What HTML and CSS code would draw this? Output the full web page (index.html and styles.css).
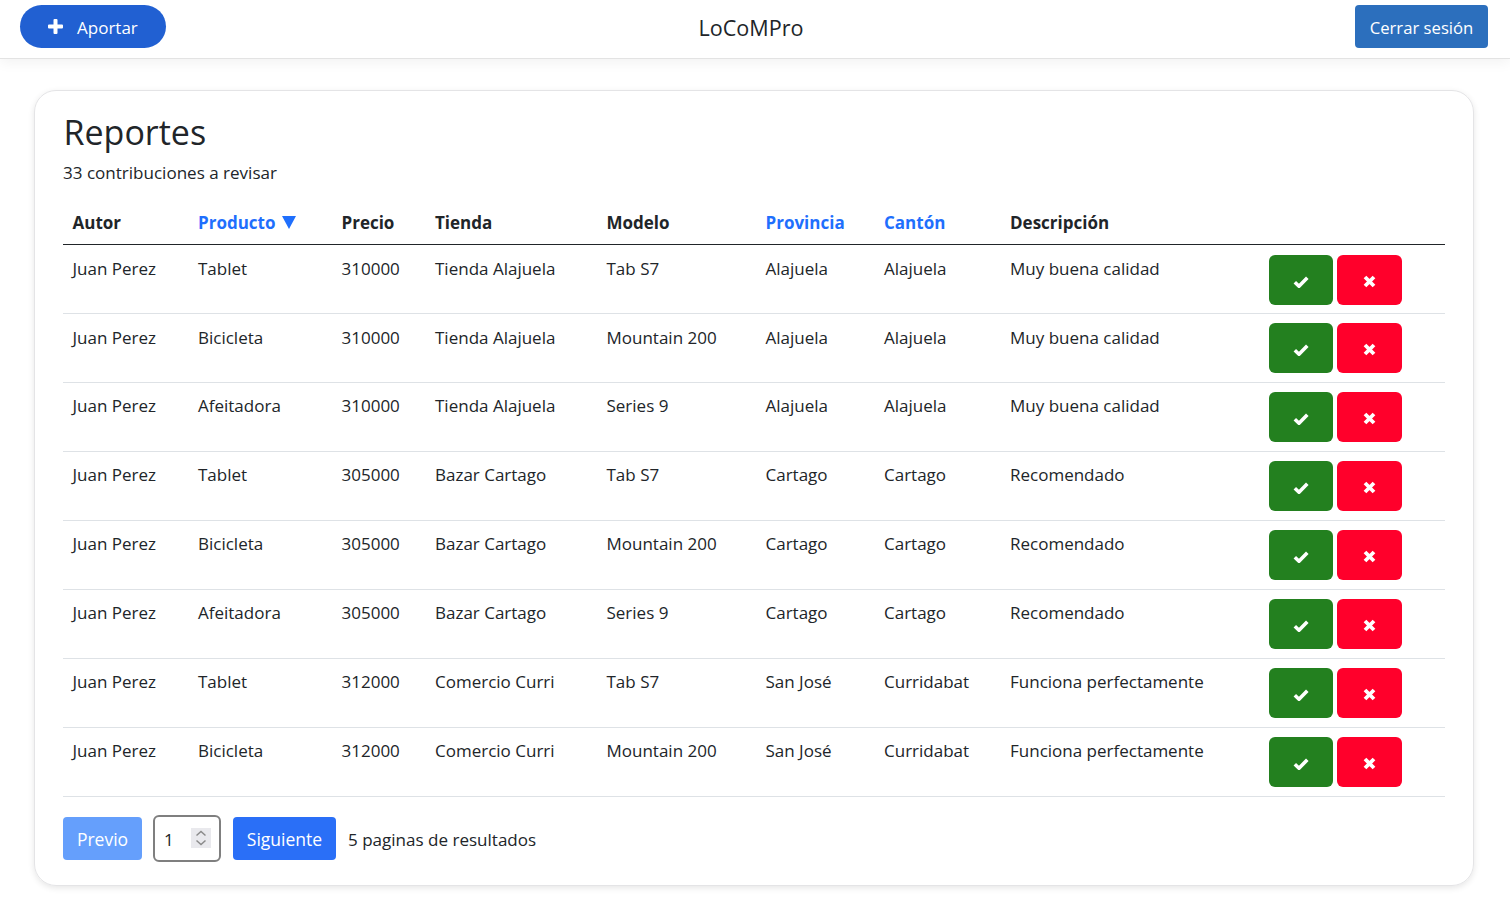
FILE: index.html
```html
<!DOCTYPE html>
<html lang="es">
<head>
<meta charset="utf-8">
<title>LoCoMPro</title>
<link rel="stylesheet" href="styles.css">
</head>
<body>
<header class="topbar">
  <button class="btn-aportar"><svg class="plus" viewBox="0 0 15 15"><path d="M5.500 1a1 1 0 0 1 1-1h2a1 1 0 0 1 1 1v4.500H14a1 1 0 0 1 1 1v2a1 1 0 0 1-1 1H9.500V14a1 1 0 0 1-1 1h-2a1 1 0 0 1-1-1V9.500H1a1 1 0 0 1-1-1v-2a1 1 0 0 1 1-1h4.500z"/></svg><span class="lbl">Aportar</span></button>
  <div class="brand">LoCoMPro</div>
  <button class="btn-logout">Cerrar sesión</button>
</header>
<main class="card">
  <h1>Reportes</h1>
  <p class="count">33 contribuciones a revisar</p>
  <table>
    <colgroup><col class="c1"><col class="c2"><col class="c3"><col class="c4"><col class="c5"><col class="c6"><col class="c7"><col class="c8"><col class="c9"></colgroup>
    <thead><tr><th>Autor</th><th class="link">Producto <svg class="sort" viewBox="0 0 14 13"><path d="M0 0h14L7 13z"/></svg></th><th>Precio</th><th>Tienda</th><th>Modelo</th><th class="link">Provincia</th><th class="link">Cantón</th><th>Descripción</th><th></th></tr></thead>
    <tbody>
      <tr><td>Juan Perez</td><td>Tablet</td><td>310000</td><td>Tienda Alajuela</td><td>Tab S7</td><td>Alajuela</td><td>Alajuela</td><td>Muy buena calidad</td><td class="acts"><button class="ok"><svg viewBox="0 0 16 12"><path d="M1.800 6.300l4.200 3.900L14.300 1.800"/></svg></button><button class="no"><svg viewBox="0 0 13 13"><path d="M2 2l9 9M11 2l-9 9"/></svg></button></td></tr>
      <tr><td>Juan Perez</td><td>Bicicleta</td><td>310000</td><td>Tienda Alajuela</td><td>Mountain 200</td><td>Alajuela</td><td>Alajuela</td><td>Muy buena calidad</td><td class="acts"><button class="ok"><svg viewBox="0 0 16 12"><path d="M1.800 6.300l4.200 3.900L14.300 1.800"/></svg></button><button class="no"><svg viewBox="0 0 13 13"><path d="M2 2l9 9M11 2l-9 9"/></svg></button></td></tr>
      <tr><td>Juan Perez</td><td>Afeitadora</td><td>310000</td><td>Tienda Alajuela</td><td>Series 9</td><td>Alajuela</td><td>Alajuela</td><td>Muy buena calidad</td><td class="acts"><button class="ok"><svg viewBox="0 0 16 12"><path d="M1.800 6.300l4.200 3.900L14.300 1.800"/></svg></button><button class="no"><svg viewBox="0 0 13 13"><path d="M2 2l9 9M11 2l-9 9"/></svg></button></td></tr>
      <tr><td>Juan Perez</td><td>Tablet</td><td>305000</td><td>Bazar Cartago</td><td>Tab S7</td><td>Cartago</td><td>Cartago</td><td>Recomendado</td><td class="acts"><button class="ok"><svg viewBox="0 0 16 12"><path d="M1.800 6.300l4.200 3.900L14.300 1.800"/></svg></button><button class="no"><svg viewBox="0 0 13 13"><path d="M2 2l9 9M11 2l-9 9"/></svg></button></td></tr>
      <tr><td>Juan Perez</td><td>Bicicleta</td><td>305000</td><td>Bazar Cartago</td><td>Mountain 200</td><td>Cartago</td><td>Cartago</td><td>Recomendado</td><td class="acts"><button class="ok"><svg viewBox="0 0 16 12"><path d="M1.800 6.300l4.200 3.900L14.300 1.800"/></svg></button><button class="no"><svg viewBox="0 0 13 13"><path d="M2 2l9 9M11 2l-9 9"/></svg></button></td></tr>
      <tr><td>Juan Perez</td><td>Afeitadora</td><td>305000</td><td>Bazar Cartago</td><td>Series 9</td><td>Cartago</td><td>Cartago</td><td>Recomendado</td><td class="acts"><button class="ok"><svg viewBox="0 0 16 12"><path d="M1.800 6.300l4.200 3.900L14.300 1.800"/></svg></button><button class="no"><svg viewBox="0 0 13 13"><path d="M2 2l9 9M11 2l-9 9"/></svg></button></td></tr>
      <tr><td>Juan Perez</td><td>Tablet</td><td>312000</td><td>Comercio Curri</td><td>Tab S7</td><td>San José</td><td>Curridabat</td><td>Funciona perfectamente</td><td class="acts"><button class="ok"><svg viewBox="0 0 16 12"><path d="M1.800 6.300l4.200 3.900L14.300 1.800"/></svg></button><button class="no"><svg viewBox="0 0 13 13"><path d="M2 2l9 9M11 2l-9 9"/></svg></button></td></tr>
      <tr><td>Juan Perez</td><td>Bicicleta</td><td>312000</td><td>Comercio Curri</td><td>Mountain 200</td><td>San José</td><td>Curridabat</td><td>Funciona perfectamente</td><td class="acts"><button class="ok"><svg viewBox="0 0 16 12"><path d="M1.800 6.300l4.200 3.900L14.300 1.800"/></svg></button><button class="no"><svg viewBox="0 0 13 13"><path d="M2 2l9 9M11 2l-9 9"/></svg></button></td></tr>
    </tbody>
  </table>
  <div class="pager">
    <button class="pg prev">Previo</button>
    <div class="numbox"><span class="num">1</span><span class="spin"><svg viewBox="0 0 20 20"><path d="M5.500 7.500L10 3.500l4.500 4M5.500 12.500l4.500 4 4.500-4"/></svg></span></div>
    <button class="pg next">Siguiente</button>
    <span class="pages">5 paginas de resultados</span>
  </div>
</main>
</body>
</html>
```
FILE: styles.css
```css
* { box-sizing: border-box; }
html, body { margin: 0; padding: 0; }
body {
  height: 917px;
  overflow: hidden;
  background: #fff;
  color: #212529;
  font-family: "Open Sans", "Noto Sans", "Liberation Sans", sans-serif;
  font-size: 17px;
}
button { font-family: inherit; border: 0; color: #fff; cursor: pointer; padding: 0; }

.topbar {
  height: 59px;
  display: flex;
  align-items: flex-start;
  justify-content: space-between;
  padding: 5px 22px 0 20px;
  border-bottom: 1px solid #e3e3e3;
  box-shadow: 0 4px 12px rgba(0, 0, 0, .05);
  position: relative;
}
.btn-aportar {
  width: 146px;
  height: 43px;
  border-radius: 22px;
  background: #2160d2;
  font-size: 17px;
  display: flex;
  align-items: center;
  padding-left: 28px;
  gap: 14px;
}
.lbl { padding-top: 2px; }
.plus { width: 15px; height: 15px; fill: #fff; }
.brand { font-size: 21.600px; line-height: 46px; color: #212529; margin-left: -19px; }
.btn-logout {
  width: 133px;
  height: 43px;
  border-radius: 4px;
  background: #2c6fbd;
  font-size: 16.700px;
  padding-top: 2px;
}

.card {
  margin: 31px 36px 0 34px;
  height: 796px;
  border: 1px solid #e4e4e6;
  border-radius: 22px;
  box-shadow: 0 2px 6px rgba(0, 0, 0, .1);
  padding: 20px 28px 0;
}
h1 { margin: 0 0 0 .5px; font-size: 34px; font-weight: 400; line-height: 42px; color: #212529; }
.count { margin: 8px 0 0; line-height: 24px; font-size: 17.050px; }

table { width: 1382px; margin-top: 15px; border-collapse: collapse; table-layout: fixed; }
.c1 { width: 126px; } .c2 { width: 143.500px; } .c3 { width: 93.500px; } .c4 { width: 171.500px; }
.c5 { width: 159px; } .c6 { width: 118.500px; } .c7 { width: 126px; } .c8 { width: 259px; } .c9 { width: 185px; }
th {
  height: 44px;
  padding: 2px 9px 0;
  text-align: left;
  font-weight: 700;
  font-size: 17px;
  border-bottom: 1px solid #212529;
  white-space: nowrap;
}
th:first-child { padding-left: 9.500px; }
th.link { color: #1f6ffd; }
.sort { width: 14px; height: 13px; fill: #1f6ffd; margin-left: 2px; }
td {
  height: 69px;
  padding: 11px 9px 0;
  vertical-align: top;
  font-size: 17px;
  line-height: 24px;
  border-bottom: 1px solid #dee2e6;
  white-space: nowrap;
}
tr:nth-child(-n+2) td { padding-top: 12px; }
td:first-child { padding-left: 9.500px; }
tr td.acts { padding: 9px 9px 0; }
tr:first-child td.acts { padding-top: 10px; }
.acts { display: table-cell; font-size: 0; }
.ok, .no {
  height: 50px;
  border-radius: 6px;
  vertical-align: top;
  display: inline-flex;
  align-items: center;
  justify-content: center;
  padding-top: 4px;
}
.ok { width: 64px; background: #23801f; margin-right: 4px; }
.no { width: 65px; background: #ff002b; }
.ok svg { width: 16px; height: 12px; fill: none; stroke: #fff; stroke-width: 3.600; }
.no svg { width: 13px; height: 13px; fill: none; stroke: #fff; stroke-width: 3.800; }

.pager { display: flex; align-items: center; margin-top: 19px; height: 45px; }
.pg { height: 43px; border-radius: 4px; font-size: 17.500px; padding-top: 2px; }
.prev { width: 79px; background: #659ffc; }
.next { width: 103px; background: #2a6ff7; }
.numbox {
  width: 68px;
  height: 47px;
  margin: 0 12px 0 11px;
  border: 2px solid #7f7f7f;
  border-radius: 6px;
  display: flex;
  align-items: center;
  padding-left: 9px;
  font-size: 17px;
}
.num { width: 27px; padding-top: 2px; }
.spin { width: 20px; height: 20px; background: #e9e9ed; display: block; }
.spin svg { width: 20px; height: 20px; display: block; fill: none; stroke: #8a8a8a; stroke-width: 1.500; }
.pages { margin-left: 12px; padding-top: 2px; font-size: 17.050px; }
```
